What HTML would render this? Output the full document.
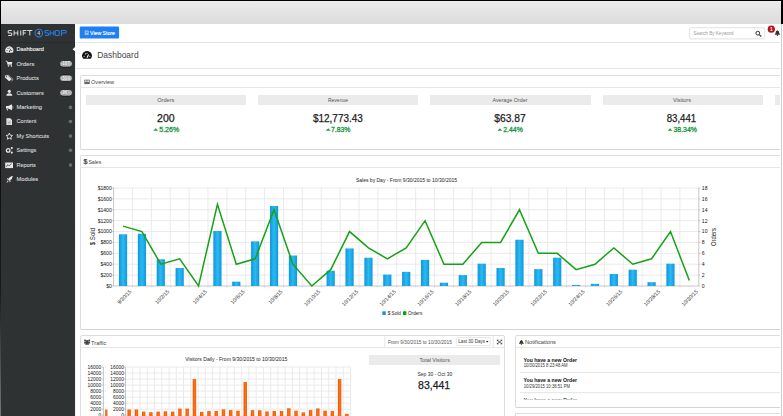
<!DOCTYPE html>
<html><head><meta charset="utf-8">
<style>
*{margin:0;padding:0;box-sizing:border-box}
html,body{width:783px;height:416px;overflow:hidden;background:#fff;font-family:"Liberation Sans", sans-serif;}
.a{position:absolute}
svg text{font-family:"Liberation Sans", sans-serif}
</style></head><body>
<div class="a" style="left:0;top:0;width:783px;height:416px;overflow:hidden;background:#fff">
<div class="a" style="left:1px;top:1px;width:780px;height:22.6px;background:linear-gradient(#ebebeb,#dcdcdc);border-top-right-radius:3px"></div>
<div class="a" style="left:0;top:0;width:783px;height:1px;background:#000"></div>
<div class="a" style="left:781px;top:0;width:2px;height:24px;background:#000"></div>
<div class="a" style="left:0;top:0;width:1px;height:416px;background:linear-gradient(#000 0%,#1a1a1a 70%,#777 100%)"></div>
<div class="a" style="left:1px;top:24px;width:74.2px;height:392px;background:#2e3233"></div>
<div class="a" style="left:1px;top:42px;width:74.2px;height:1px;background:#282b2c"></div>
<div class="a" style="left:75.2px;top:41.6px;width:706px;height:1px;background:#e6e6e6"></div>
<div class="a" style="left:75.2px;top:68px;width:706px;height:1px;background:#e6e6e6"></div>
<div class="a" style="left:75.2px;top:42px;width:1px;height:374px;background:#f1f1f1"></div>
<div class="a" style="left:781.2px;top:24px;width:1px;height:392px;background:#cdcdcd"></div>
<!-- panels -->
<div class="a" style="left:80px;top:75.3px;width:720px;height:74.6px;border:1px solid #dddddd;border-bottom:1.5px solid #d6d6d6;border-radius:2px"></div>
<div class="a" style="left:80px;top:86.6px;width:720px;height:1px;background:#e6e6e6"></div>
<div class="a" style="left:80px;top:155.3px;width:720px;height:174.6px;border:1px solid #dddddd;border-bottom:1.6px solid #d4d4d4;border-radius:2px"></div>
<div class="a" style="left:80px;top:166.6px;width:720px;height:1px;background:#e6e6e6"></div>
<div class="a" style="left:80px;top:335.3px;width:425px;height:100px;border:1px solid #dddddd;border-radius:2px"></div>
<div class="a" style="left:80px;top:347px;width:425px;height:1px;background:#e6e6e6"></div>
<div class="a" style="left:515px;top:335.3px;width:300px;height:73px;border:1px solid #dddddd;border-bottom:1.6px solid #d4d4d4;border-radius:2px"></div>
<div class="a" style="left:515px;top:347px;width:300px;height:1px;background:#e6e6e6"></div>
<div class="a" style="left:515px;top:413px;width:300px;height:20px;border:1px solid #dddddd"></div>
<!-- gray cells -->
<div class="a" style="left:85.6px;top:94.9px;width:160.4px;height:10.2px;background:#ebebeb"></div>
<div class="a" style="left:257.9px;top:94.9px;width:160.4px;height:10.2px;background:#ebebeb"></div>
<div class="a" style="left:430.2px;top:94.9px;width:160.4px;height:10.2px;background:#ebebeb"></div>
<div class="a" style="left:602.5px;top:94.9px;width:160.4px;height:10.2px;background:#ebebeb"></div>
<div class="a" style="left:774.8px;top:94.9px;width:60px;height:10.2px;background:#ebebeb"></div>
<div class="a" style="left:369.4px;top:354.8px;width:130.5px;height:10.6px;background:#ebebeb"></div>
<svg class="a" style="left:0;top:0" width="783" height="416" viewBox="0 0 783 416">
<path d="M11.8 30.4 H9.1 Q8.1 30.4 8.1 31.4 V31.950000000000003 Q8.1 32.95 9.1 32.95 H10.8 Q11.8 32.95 11.8 33.95 V34.5 Q11.8 35.5 10.8 35.5 H8.1" fill="none" stroke="#d8d8d8" stroke-width="1.05"/>
<path d="M14.1 30.4 V35.5 M17.8 30.4 V35.5 M14.1 32.95 H17.8" fill="none" stroke="#d8d8d8" stroke-width="1.05"/>
<path d="M20.75 30.4 V35.5" fill="none" stroke="#d8d8d8" stroke-width="1.05"/>
<path d="M26.4 30.4 H23.2 V35.5 M23.2 32.95 H25.799999999999997" fill="none" stroke="#d8d8d8" stroke-width="1.05"/>
<path d="M27.2 30.4 H32.4 M29.799999999999997 30.4 V35.5" fill="none" stroke="#d8d8d8" stroke-width="1.05"/>
<circle cx="38.8" cy="33.1" r="3.8" fill="none" stroke="#2a7de6" stroke-width="1.1"/>
<text x="38.60" y="35.30" font-size="5.2" font-weight="bold" text-anchor="middle" fill="#cfcfcf">4</text>
<path d="M48.6 30.4 H46.0 Q45.0 30.4 45.0 31.4 V31.950000000000003 Q45.0 32.95 46.0 32.95 H47.6 Q48.6 32.95 48.6 33.95 V34.5 Q48.6 35.5 47.6 35.5 H45.0" fill="none" stroke="#2a7de6" stroke-width="1.05"/>
<path d="M50.1 30.4 V35.5 M53.8 30.4 V35.5 M50.1 32.95 H53.8" fill="none" stroke="#2a7de6" stroke-width="1.05"/>
<path d="M56.2 30.4 H58.2 Q59.2 30.4 59.2 31.4 V34.5 Q59.2 35.5 58.2 35.5 H56.2 Q55.2 35.5 55.2 34.5 V31.4 Q55.2 30.4 56.2 30.4 Z" fill="none" stroke="#2a7de6" stroke-width="1.05"/>
<path d="M61.4 36.0 V30.4 H65.2 Q66.2 30.4 66.2 31.4 V31.950000000000003 Q66.2 32.95 65.2 32.95 H61.4" fill="none" stroke="#2a7de6" stroke-width="1.05"/>
<g transform="translate(5.3,46.50)"><path d="M0.8 6.3 A4 4 0 1 1 7.2 6.3 Z" fill="#e6e6e6"/><path d="M4 5.5 L5.3 2.6" stroke="#2e3233" stroke-width="0.9"/><circle cx="1.7" cy="4.1" r="0.5" fill="#2e3233"/><circle cx="2.7" cy="2.1" r="0.5" fill="#2e3233"/><circle cx="6.3" cy="4.1" r="0.5" fill="#2e3233"/><circle cx="4" cy="1.4" r="0.5" fill="#2e3233"/></g>
<text x="16.54" y="51.20" font-size="6.0" textLength="27.42" lengthAdjust="spacingAndGlyphs" fill="#f2f2f2" stroke="#f2f2f2" stroke-width="0.12">Dashboard</text>
<g transform="translate(5.8,60.80)"><path d="M0 0.4 H1.3 L2.2 4 H6.2" fill="none" stroke="#e6e6e6" stroke-width="0.9"/><path d="M1.6 1.2 H6.6 L6 3.3 H2.1 Z" fill="#e6e6e6"/><circle cx="2.6" cy="5.2" r="0.7" fill="#e6e6e6"/><circle cx="5.6" cy="5.2" r="0.7" fill="#e6e6e6"/></g>
<text x="16.54" y="65.50" font-size="6.0" textLength="17.92" lengthAdjust="spacingAndGlyphs" fill="#d6d6d6" stroke="#d6d6d6" stroke-width="0.12">Orders</text>
<rect x="59.6" y="60.50" width="12.9" height="6.6" rx="3.3" fill="#b9b9b9" stroke="#141616" stroke-width="0.8"/>
<text x="61.90" y="65.40" font-size="4.6" textLength="8.20" lengthAdjust="spacingAndGlyphs" font-weight="bold" fill="#fafafa" stroke="#5a5a5a" stroke-width="0.35" paint-order="stroke">187</text>
<g transform="translate(4.8,75.10)"><path d="M0 0.3 H3 L7 4.2 L4.3 6.2 L0.2 2.5 Z" fill="#e6e6e6"/><path d="M1.6 0.3 H4 L8.4 4.4 L6.6 6" fill="none" stroke="#e6e6e6" stroke-width="0.6"/><circle cx="1.5" cy="1.6" r="0.6" fill="#2e3233"/></g>
<text x="16.54" y="79.90" font-size="6.0" textLength="22.22" lengthAdjust="spacingAndGlyphs" fill="#d6d6d6" stroke="#d6d6d6" stroke-width="0.12">Products</text>
<rect x="59.6" y="74.90" width="12.9" height="6.6" rx="3.3" fill="#b9b9b9" stroke="#141616" stroke-width="0.8"/>
<text x="61.90" y="79.80" font-size="4.6" textLength="8.20" lengthAdjust="spacingAndGlyphs" font-weight="bold" fill="#fafafa" stroke="#5a5a5a" stroke-width="0.35" paint-order="stroke">309</text>
<g transform="translate(6.3,89.70)"><circle cx="3" cy="1.6" r="1.6" fill="#e6e6e6"/><path d="M0 6.1 Q0 3.5 3 3.5 Q6 3.5 6 6.1 Z" fill="#e6e6e6"/></g>
<text x="16.54" y="94.50" font-size="6.0" textLength="27.22" lengthAdjust="spacingAndGlyphs" fill="#d6d6d6" stroke="#d6d6d6" stroke-width="0.12">Customers</text>
<rect x="59.6" y="89.50" width="12.9" height="6.6" rx="3.3" fill="#b9b9b9" stroke="#141616" stroke-width="0.8"/>
<text x="61.90" y="94.40" font-size="4.6" textLength="8.20" lengthAdjust="spacingAndGlyphs" font-weight="bold" fill="#fafafa" stroke="#5a5a5a" stroke-width="0.35" paint-order="stroke">1K+</text>
<g transform="translate(5.8,104.30)"><path d="M0.2 1.8 H2.4 L6.2 0 V6 L2.4 4.3 H0.2 Z" fill="#e6e6e6"/><path d="M1.2 4.3 L1.9 6.2" stroke="#e6e6e6" stroke-width="1"/><path d="M7 1.8 V4.2" stroke="#e6e6e6" stroke-width="0.6"/></g>
<text x="16.54" y="109.20" font-size="6.0" textLength="25.52" lengthAdjust="spacingAndGlyphs" fill="#d6d6d6" stroke="#d6d6d6" stroke-width="0.12">Marketing</text>
<circle cx="70.5" cy="107.40" r="1.8" fill="#6a6e6f"/>
<g transform="translate(6,117.90)"><path d="M0.4 0.4 H4.3 L6 2.1 V7.2 H0.4 Z" fill="#e6e6e6"/><path d="M1.5 3.3 H4.8 M1.5 4.6 H4.8 M1.5 5.9 H4.8" stroke="#888" stroke-width="0.5"/></g>
<text x="16.54" y="123.30" font-size="6.0" textLength="19.82" lengthAdjust="spacingAndGlyphs" fill="#d6d6d6" stroke="#d6d6d6" stroke-width="0.12">Content</text>
<circle cx="70.5" cy="121.50" r="1.8" fill="#6a6e6f"/>
<g transform="translate(5.8,133.10)"><polygon points="3.50,0.00 4.44,2.11 6.73,2.35 5.02,3.89 5.50,6.15 3.50,5.00 1.50,6.15 1.98,3.89 0.27,2.35 2.56,2.11" fill="none" stroke="#e6e6e6" stroke-width="0.9"/></g>
<text x="16.54" y="137.90" font-size="6.0" textLength="32.62" lengthAdjust="spacingAndGlyphs" fill="#d6d6d6" stroke="#d6d6d6" stroke-width="0.12">My Shortcuts</text>
<circle cx="70.5" cy="136.10" r="1.8" fill="#6a6e6f"/>
<g transform="translate(5.8,146.80)"><circle cx="2.4" cy="3.6" r="1.8" fill="none" stroke="#e6e6e6" stroke-width="1.3"/><circle cx="6" cy="1.3" r="1.1" fill="#e6e6e6"/><circle cx="6" cy="5.8" r="1.1" fill="#e6e6e6"/></g>
<text x="16.54" y="152.10" font-size="6.0" textLength="19.82" lengthAdjust="spacingAndGlyphs" fill="#d6d6d6" stroke="#d6d6d6" stroke-width="0.12">Settings</text>
<circle cx="70.5" cy="150.30" r="1.8" fill="#6a6e6f"/>
<g transform="translate(4.8,162.10)"><rect x="0.4" y="0.4" width="7.8" height="5.6" fill="#e6e6e6"/><path d="M1.6 4.8 L3 2.5 L4.3 3.8 L6.8 1.5" fill="none" stroke="#2e3233" stroke-width="0.7"/></g>
<text x="16.54" y="166.90" font-size="6.0" textLength="19.32" lengthAdjust="spacingAndGlyphs" fill="#d6d6d6" stroke="#d6d6d6" stroke-width="0.12">Reports</text>
<circle cx="70.5" cy="165.10" r="1.8" fill="#6a6e6f"/>
<g transform="translate(6.3,176.00)"><path d="M6.6 0 Q3.2 0.4 1.7 3.6 L3 4.9 Q6.2 3.4 6.6 0 Z" fill="#e6e6e6"/><path d="M1.9 3.4 L0.2 3.2 L1.9 1.8 Z M3.2 4.7 L3.4 6.4 L4.7 4.7 Z M1.4 4.6 L0 7 L2.3 5.6 Z" fill="#e6e6e6"/></g>
<text x="16.54" y="181.40" font-size="6.0" textLength="21.72" lengthAdjust="spacingAndGlyphs" fill="#d6d6d6" stroke="#d6d6d6" stroke-width="0.12">Modules</text>
<path d="M76 46.3 L72.6 49.2 L76 52.1 Z" fill="#fff"/>
<rect x="79.7" y="26.4" width="39.4" height="12" rx="1" fill="#1f80f3"/>
<g transform="translate(84.6,30.7)"><path d="M0.6 0.3 H3.6 V2.6 H0.6 Z" fill="none" stroke="#fff" stroke-width="0.6"/><path d="M0 3.2 H4.2 V3.8 H0 Z" fill="#fff"/></g>
<text x="90.06" y="34.50" font-size="5.6" textLength="24.87" lengthAdjust="spacingAndGlyphs" fill="#fff" stroke="#fff" stroke-width="0.15">View Store</text>
<rect x="689.7" y="27.7" width="75" height="11.2" rx="1.5" fill="#fff" stroke="#d9d9d9" stroke-width="0.8"/>
<text x="693.41" y="35.20" font-size="4.9" textLength="40.19" lengthAdjust="spacingAndGlyphs" fill="#9a9a9a">Search By Keyword</text>
<g transform="translate(755.4,30.8)"><circle cx="2.4" cy="2.4" r="1.9" fill="none" stroke="#333" stroke-width="1"/><path d="M3.8 3.8 L5.9 5.7" stroke="#333" stroke-width="1.2"/></g>
<circle cx="771.3" cy="29.2" r="3.6" fill="#b8121b"/>
<text x="771.30" y="31.00" font-size="4.8" font-weight="bold" text-anchor="middle" fill="#fff">1</text>
<g transform="translate(774.6,30)"><path d="M2.8 0.3 Q4.7 0.8 4.7 3.2 L5.6 4.8 H0 L0.9 3.2 Q0.9 0.8 2.8 0.3 Z" fill="#333"/><circle cx="2.8" cy="5.3" r="0.7" fill="#333"/></g>
<g transform="translate(82.2,51.5) scale(0.96)"><path d="M1.0 7.6 A5 5 0 1 1 9.0 7.6 Z" fill="#151515"/><path d="M5 6.6 L6.6 3.2" stroke="#fff" stroke-width="1.1"/><circle cx="2.1" cy="4.9" r="0.6" fill="#fff"/><circle cx="3.3" cy="2.5" r="0.6" fill="#fff"/><circle cx="7.9" cy="4.9" r="0.6" fill="#fff"/><circle cx="5" cy="1.8" r="0.6" fill="#fff"/></g>
<text x="97.21" y="57.90" font-size="9.9" textLength="41.39" lengthAdjust="spacingAndGlyphs" fill="#444">Dashboard</text>
<g transform="translate(84,79.4)"><rect x="0.3" y="0.3" width="5.4" height="4.4" fill="#666" /><rect x="1.1" y="1.1" width="1.5" height="1.4" fill="#fff"/><rect x="3.3" y="1.1" width="1.6" height="1.4" fill="#fff"/></g>
<text x="91.09" y="83.80" font-size="5.2" textLength="23.02" lengthAdjust="spacingAndGlyphs" fill="#444">Overview</text>
<text x="157.16" y="102.10" font-size="5.6" textLength="17.17" lengthAdjust="spacingAndGlyphs" fill="#555">Orders</text>
<text x="327.96" y="102.10" font-size="5.6" textLength="20.07" lengthAdjust="spacingAndGlyphs" fill="#555">Revenue</text>
<text x="492.46" y="102.10" font-size="5.6" textLength="34.97" lengthAdjust="spacingAndGlyphs" fill="#555">Average Order</text>
<text x="672.96" y="102.10" font-size="5.6" textLength="17.97" lengthAdjust="spacingAndGlyphs" fill="#555">Visitors</text>
<text x="157.07" y="121.70" font-size="10.5" textLength="17.56" lengthAdjust="spacingAndGlyphs" fill="#1c1c1c" stroke="#1c1c1c" stroke-width="0.25">200</text>
<text x="312.97" y="121.70" font-size="10.5" textLength="49.86" lengthAdjust="spacingAndGlyphs" fill="#1c1c1c" stroke="#1c1c1c" stroke-width="0.25">$12,773.43</text>
<text x="494.27" y="121.70" font-size="10.5" textLength="31.36" lengthAdjust="spacingAndGlyphs" fill="#1c1c1c" stroke="#1c1c1c" stroke-width="0.25">$63.87</text>
<text x="666.67" y="121.70" font-size="10.5" textLength="29.56" lengthAdjust="spacingAndGlyphs" fill="#1c1c1c" stroke="#1c1c1c" stroke-width="0.25">83,441</text>
<path d="M153.30 130.8 L155.70 128.2 L158.10 130.8 Z" fill="#1e9c48"/>
<text x="159.28" y="131.70" font-size="7.0" textLength="19.84" lengthAdjust="spacingAndGlyphs" fill="#169844" stroke="#169844" stroke-width="0.3">5.26%</text>
<path d="M325.80 130.8 L328.20 128.2 L330.60 130.8 Z" fill="#1e9c48"/>
<text x="331.08" y="131.70" font-size="7.0" textLength="19.34" lengthAdjust="spacingAndGlyphs" fill="#169844" stroke="#169844" stroke-width="0.3">7.83%</text>
<path d="M497.50 130.8 L499.90 128.2 L502.30 130.8 Z" fill="#1e9c48"/>
<text x="503.18" y="131.70" font-size="7.0" textLength="19.64" lengthAdjust="spacingAndGlyphs" fill="#169844" stroke="#169844" stroke-width="0.3">2.44%</text>
<path d="M667.70 130.8 L670.10 128.2 L672.50 130.8 Z" fill="#1e9c48"/>
<text x="673.48" y="131.70" font-size="7.0" textLength="23.54" lengthAdjust="spacingAndGlyphs" fill="#169844" stroke="#169844" stroke-width="0.3">38.34%</text>
<text x="83.62" y="164.40" font-size="6.4" textLength="3.97" lengthAdjust="spacingAndGlyphs" fill="#333" stroke="#333" stroke-width="0.2">$</text>
<text x="88.39" y="164.00" font-size="5.2" textLength="12.92" lengthAdjust="spacingAndGlyphs" fill="#444">Sales</text>
<line x1="113.6" y1="188.00" x2="698.8" y2="188.00" stroke="#e8e8e8" stroke-width="0.9"/>
<line x1="113.6" y1="198.89" x2="698.8" y2="198.89" stroke="#e8e8e8" stroke-width="0.9"/>
<line x1="113.6" y1="209.78" x2="698.8" y2="209.78" stroke="#e8e8e8" stroke-width="0.9"/>
<line x1="113.6" y1="220.67" x2="698.8" y2="220.67" stroke="#e8e8e8" stroke-width="0.9"/>
<line x1="113.6" y1="231.56" x2="698.8" y2="231.56" stroke="#e8e8e8" stroke-width="0.9"/>
<line x1="113.6" y1="242.44" x2="698.8" y2="242.44" stroke="#e8e8e8" stroke-width="0.9"/>
<line x1="113.6" y1="253.33" x2="698.8" y2="253.33" stroke="#e8e8e8" stroke-width="0.9"/>
<line x1="113.6" y1="264.22" x2="698.8" y2="264.22" stroke="#e8e8e8" stroke-width="0.9"/>
<line x1="113.6" y1="275.11" x2="698.8" y2="275.11" stroke="#e8e8e8" stroke-width="0.9"/>
<line x1="132.48" y1="188.0" x2="132.48" y2="286.0" stroke="#e8e8e8" stroke-width="0.9"/>
<line x1="132.48" y1="286.0" x2="132.48" y2="287.5" stroke="#c8c8c8" stroke-width="0.7"/>
<line x1="151.35" y1="188.0" x2="151.35" y2="286.0" stroke="#e8e8e8" stroke-width="0.9"/>
<line x1="151.35" y1="286.0" x2="151.35" y2="287.5" stroke="#c8c8c8" stroke-width="0.7"/>
<line x1="170.23" y1="188.0" x2="170.23" y2="286.0" stroke="#e8e8e8" stroke-width="0.9"/>
<line x1="170.23" y1="286.0" x2="170.23" y2="287.5" stroke="#c8c8c8" stroke-width="0.7"/>
<line x1="189.11" y1="188.0" x2="189.11" y2="286.0" stroke="#e8e8e8" stroke-width="0.9"/>
<line x1="189.11" y1="286.0" x2="189.11" y2="287.5" stroke="#c8c8c8" stroke-width="0.7"/>
<line x1="207.99" y1="188.0" x2="207.99" y2="286.0" stroke="#e8e8e8" stroke-width="0.9"/>
<line x1="207.99" y1="286.0" x2="207.99" y2="287.5" stroke="#c8c8c8" stroke-width="0.7"/>
<line x1="226.86" y1="188.0" x2="226.86" y2="286.0" stroke="#e8e8e8" stroke-width="0.9"/>
<line x1="226.86" y1="286.0" x2="226.86" y2="287.5" stroke="#c8c8c8" stroke-width="0.7"/>
<line x1="245.74" y1="188.0" x2="245.74" y2="286.0" stroke="#e8e8e8" stroke-width="0.9"/>
<line x1="245.74" y1="286.0" x2="245.74" y2="287.5" stroke="#c8c8c8" stroke-width="0.7"/>
<line x1="264.62" y1="188.0" x2="264.62" y2="286.0" stroke="#e8e8e8" stroke-width="0.9"/>
<line x1="264.62" y1="286.0" x2="264.62" y2="287.5" stroke="#c8c8c8" stroke-width="0.7"/>
<line x1="283.50" y1="188.0" x2="283.50" y2="286.0" stroke="#e8e8e8" stroke-width="0.9"/>
<line x1="283.50" y1="286.0" x2="283.50" y2="287.5" stroke="#c8c8c8" stroke-width="0.7"/>
<line x1="302.37" y1="188.0" x2="302.37" y2="286.0" stroke="#e8e8e8" stroke-width="0.9"/>
<line x1="302.37" y1="286.0" x2="302.37" y2="287.5" stroke="#c8c8c8" stroke-width="0.7"/>
<line x1="321.25" y1="188.0" x2="321.25" y2="286.0" stroke="#e8e8e8" stroke-width="0.9"/>
<line x1="321.25" y1="286.0" x2="321.25" y2="287.5" stroke="#c8c8c8" stroke-width="0.7"/>
<line x1="340.13" y1="188.0" x2="340.13" y2="286.0" stroke="#e8e8e8" stroke-width="0.9"/>
<line x1="340.13" y1="286.0" x2="340.13" y2="287.5" stroke="#c8c8c8" stroke-width="0.7"/>
<line x1="359.01" y1="188.0" x2="359.01" y2="286.0" stroke="#e8e8e8" stroke-width="0.9"/>
<line x1="359.01" y1="286.0" x2="359.01" y2="287.5" stroke="#c8c8c8" stroke-width="0.7"/>
<line x1="377.88" y1="188.0" x2="377.88" y2="286.0" stroke="#e8e8e8" stroke-width="0.9"/>
<line x1="377.88" y1="286.0" x2="377.88" y2="287.5" stroke="#c8c8c8" stroke-width="0.7"/>
<line x1="396.76" y1="188.0" x2="396.76" y2="286.0" stroke="#e8e8e8" stroke-width="0.9"/>
<line x1="396.76" y1="286.0" x2="396.76" y2="287.5" stroke="#c8c8c8" stroke-width="0.7"/>
<line x1="415.64" y1="188.0" x2="415.64" y2="286.0" stroke="#e8e8e8" stroke-width="0.9"/>
<line x1="415.64" y1="286.0" x2="415.64" y2="287.5" stroke="#c8c8c8" stroke-width="0.7"/>
<line x1="434.52" y1="188.0" x2="434.52" y2="286.0" stroke="#e8e8e8" stroke-width="0.9"/>
<line x1="434.52" y1="286.0" x2="434.52" y2="287.5" stroke="#c8c8c8" stroke-width="0.7"/>
<line x1="453.39" y1="188.0" x2="453.39" y2="286.0" stroke="#e8e8e8" stroke-width="0.9"/>
<line x1="453.39" y1="286.0" x2="453.39" y2="287.5" stroke="#c8c8c8" stroke-width="0.7"/>
<line x1="472.27" y1="188.0" x2="472.27" y2="286.0" stroke="#e8e8e8" stroke-width="0.9"/>
<line x1="472.27" y1="286.0" x2="472.27" y2="287.5" stroke="#c8c8c8" stroke-width="0.7"/>
<line x1="491.15" y1="188.0" x2="491.15" y2="286.0" stroke="#e8e8e8" stroke-width="0.9"/>
<line x1="491.15" y1="286.0" x2="491.15" y2="287.5" stroke="#c8c8c8" stroke-width="0.7"/>
<line x1="510.03" y1="188.0" x2="510.03" y2="286.0" stroke="#e8e8e8" stroke-width="0.9"/>
<line x1="510.03" y1="286.0" x2="510.03" y2="287.5" stroke="#c8c8c8" stroke-width="0.7"/>
<line x1="528.90" y1="188.0" x2="528.90" y2="286.0" stroke="#e8e8e8" stroke-width="0.9"/>
<line x1="528.90" y1="286.0" x2="528.90" y2="287.5" stroke="#c8c8c8" stroke-width="0.7"/>
<line x1="547.78" y1="188.0" x2="547.78" y2="286.0" stroke="#e8e8e8" stroke-width="0.9"/>
<line x1="547.78" y1="286.0" x2="547.78" y2="287.5" stroke="#c8c8c8" stroke-width="0.7"/>
<line x1="566.66" y1="188.0" x2="566.66" y2="286.0" stroke="#e8e8e8" stroke-width="0.9"/>
<line x1="566.66" y1="286.0" x2="566.66" y2="287.5" stroke="#c8c8c8" stroke-width="0.7"/>
<line x1="585.54" y1="188.0" x2="585.54" y2="286.0" stroke="#e8e8e8" stroke-width="0.9"/>
<line x1="585.54" y1="286.0" x2="585.54" y2="287.5" stroke="#c8c8c8" stroke-width="0.7"/>
<line x1="604.41" y1="188.0" x2="604.41" y2="286.0" stroke="#e8e8e8" stroke-width="0.9"/>
<line x1="604.41" y1="286.0" x2="604.41" y2="287.5" stroke="#c8c8c8" stroke-width="0.7"/>
<line x1="623.29" y1="188.0" x2="623.29" y2="286.0" stroke="#e8e8e8" stroke-width="0.9"/>
<line x1="623.29" y1="286.0" x2="623.29" y2="287.5" stroke="#c8c8c8" stroke-width="0.7"/>
<line x1="642.17" y1="188.0" x2="642.17" y2="286.0" stroke="#e8e8e8" stroke-width="0.9"/>
<line x1="642.17" y1="286.0" x2="642.17" y2="287.5" stroke="#c8c8c8" stroke-width="0.7"/>
<line x1="661.05" y1="188.0" x2="661.05" y2="286.0" stroke="#e8e8e8" stroke-width="0.9"/>
<line x1="661.05" y1="286.0" x2="661.05" y2="287.5" stroke="#c8c8c8" stroke-width="0.7"/>
<line x1="679.92" y1="188.0" x2="679.92" y2="286.0" stroke="#e8e8e8" stroke-width="0.9"/>
<line x1="679.92" y1="286.0" x2="679.92" y2="287.5" stroke="#c8c8c8" stroke-width="0.7"/>
<line x1="113.6" y1="188.0" x2="113.6" y2="286.0" stroke="#c6c6c6" stroke-width="1"/>
<line x1="698.8" y1="188.0" x2="698.8" y2="286.0" stroke="#c6c6c6" stroke-width="1"/>
<line x1="113.6" y1="286.0" x2="698.8" y2="286.0" stroke="#c6c6c6" stroke-width="1"/>
<line x1="112.1" y1="188.00" x2="113.6" y2="188.00" stroke="#aaa" stroke-width="0.6"/>
<text x="111.80" y="189.85" font-size="5.1" text-anchor="end" fill="#151515">$1800</text>
<line x1="698.8" y1="188.00" x2="700.3" y2="188.00" stroke="#aaa" stroke-width="0.6"/>
<text x="701.80" y="189.85" font-size="5.1" fill="#151515">18</text>
<line x1="112.1" y1="198.89" x2="113.6" y2="198.89" stroke="#aaa" stroke-width="0.6"/>
<text x="111.80" y="200.74" font-size="5.1" text-anchor="end" fill="#151515">$1600</text>
<line x1="698.8" y1="198.89" x2="700.3" y2="198.89" stroke="#aaa" stroke-width="0.6"/>
<text x="701.80" y="200.74" font-size="5.1" fill="#151515">16</text>
<line x1="112.1" y1="209.78" x2="113.6" y2="209.78" stroke="#aaa" stroke-width="0.6"/>
<text x="111.80" y="211.63" font-size="5.1" text-anchor="end" fill="#151515">$1400</text>
<line x1="698.8" y1="209.78" x2="700.3" y2="209.78" stroke="#aaa" stroke-width="0.6"/>
<text x="701.80" y="211.63" font-size="5.1" fill="#151515">14</text>
<line x1="112.1" y1="220.67" x2="113.6" y2="220.67" stroke="#aaa" stroke-width="0.6"/>
<text x="111.80" y="222.52" font-size="5.1" text-anchor="end" fill="#151515">$1200</text>
<line x1="698.8" y1="220.67" x2="700.3" y2="220.67" stroke="#aaa" stroke-width="0.6"/>
<text x="701.80" y="222.52" font-size="5.1" fill="#151515">12</text>
<line x1="112.1" y1="231.56" x2="113.6" y2="231.56" stroke="#aaa" stroke-width="0.6"/>
<text x="111.80" y="233.41" font-size="5.1" text-anchor="end" fill="#151515">$1000</text>
<line x1="698.8" y1="231.56" x2="700.3" y2="231.56" stroke="#aaa" stroke-width="0.6"/>
<text x="701.80" y="233.41" font-size="5.1" fill="#151515">10</text>
<line x1="112.1" y1="242.44" x2="113.6" y2="242.44" stroke="#aaa" stroke-width="0.6"/>
<text x="111.80" y="244.29" font-size="5.1" text-anchor="end" fill="#151515">$800</text>
<line x1="698.8" y1="242.44" x2="700.3" y2="242.44" stroke="#aaa" stroke-width="0.6"/>
<text x="701.80" y="244.29" font-size="5.1" fill="#151515">8</text>
<line x1="112.1" y1="253.33" x2="113.6" y2="253.33" stroke="#aaa" stroke-width="0.6"/>
<text x="111.80" y="255.18" font-size="5.1" text-anchor="end" fill="#151515">$600</text>
<line x1="698.8" y1="253.33" x2="700.3" y2="253.33" stroke="#aaa" stroke-width="0.6"/>
<text x="701.80" y="255.18" font-size="5.1" fill="#151515">6</text>
<line x1="112.1" y1="264.22" x2="113.6" y2="264.22" stroke="#aaa" stroke-width="0.6"/>
<text x="111.80" y="266.07" font-size="5.1" text-anchor="end" fill="#151515">$400</text>
<line x1="698.8" y1="264.22" x2="700.3" y2="264.22" stroke="#aaa" stroke-width="0.6"/>
<text x="701.80" y="266.07" font-size="5.1" fill="#151515">4</text>
<line x1="112.1" y1="275.11" x2="113.6" y2="275.11" stroke="#aaa" stroke-width="0.6"/>
<text x="111.80" y="276.96" font-size="5.1" text-anchor="end" fill="#151515">$200</text>
<line x1="698.8" y1="275.11" x2="700.3" y2="275.11" stroke="#aaa" stroke-width="0.6"/>
<text x="701.80" y="276.96" font-size="5.1" fill="#151515">2</text>
<line x1="112.1" y1="286.00" x2="113.6" y2="286.00" stroke="#aaa" stroke-width="0.6"/>
<text x="111.80" y="287.85" font-size="5.1" text-anchor="end" fill="#151515">$0</text>
<line x1="698.8" y1="286.00" x2="700.3" y2="286.00" stroke="#aaa" stroke-width="0.6"/>
<text x="701.80" y="287.85" font-size="5.1" fill="#151515">0</text>
<defs><linearGradient id="bg" x1="0" x2="1" y1="0" y2="0"><stop offset="0" stop-color="#0e96dc"/><stop offset="0.5" stop-color="#2bbaf2"/><stop offset="1" stop-color="#0e98dd"/></linearGradient><linearGradient id="og" x1="0" x2="1" y1="0" y2="0"><stop offset="0" stop-color="#e85000"/><stop offset="0.5" stop-color="#ff7414"/><stop offset="1" stop-color="#f05800"/></linearGradient></defs>
<rect x="118.94" y="234.28" width="8.2" height="51.72" fill="url(#bg)"/>
<rect x="137.82" y="233.73" width="8.2" height="52.27" fill="url(#bg)"/>
<rect x="156.69" y="259.32" width="8.2" height="26.68" fill="url(#bg)"/>
<rect x="175.57" y="268.03" width="8.2" height="17.97" fill="url(#bg)"/>
<rect x="213.33" y="231.01" width="8.2" height="54.99" fill="url(#bg)"/>
<rect x="232.20" y="281.64" width="8.2" height="4.36" fill="url(#bg)"/>
<rect x="251.08" y="241.36" width="8.2" height="44.64" fill="url(#bg)"/>
<rect x="269.96" y="205.97" width="8.2" height="80.03" fill="url(#bg)"/>
<rect x="288.84" y="255.51" width="8.2" height="30.49" fill="url(#bg)"/>
<rect x="326.59" y="270.76" width="8.2" height="15.24" fill="url(#bg)"/>
<rect x="345.47" y="248.43" width="8.2" height="37.57" fill="url(#bg)"/>
<rect x="364.35" y="257.69" width="8.2" height="28.31" fill="url(#bg)"/>
<rect x="383.22" y="274.57" width="8.2" height="11.43" fill="url(#bg)"/>
<rect x="402.10" y="271.84" width="8.2" height="14.16" fill="url(#bg)"/>
<rect x="420.98" y="259.87" width="8.2" height="26.13" fill="url(#bg)"/>
<rect x="439.85" y="282.73" width="8.2" height="3.27" fill="url(#bg)"/>
<rect x="458.73" y="275.11" width="8.2" height="10.89" fill="url(#bg)"/>
<rect x="477.61" y="263.68" width="8.2" height="22.32" fill="url(#bg)"/>
<rect x="496.49" y="268.03" width="8.2" height="17.97" fill="url(#bg)"/>
<rect x="515.36" y="239.72" width="8.2" height="46.28" fill="url(#bg)"/>
<rect x="534.24" y="269.12" width="8.2" height="16.88" fill="url(#bg)"/>
<rect x="553.12" y="257.69" width="8.2" height="28.31" fill="url(#bg)"/>
<rect x="572.00" y="284.91" width="8.2" height="1.09" fill="url(#bg)"/>
<rect x="590.87" y="283.82" width="8.2" height="2.18" fill="url(#bg)"/>
<rect x="609.75" y="274.02" width="8.2" height="11.98" fill="url(#bg)"/>
<rect x="628.63" y="269.67" width="8.2" height="16.33" fill="url(#bg)"/>
<rect x="647.51" y="282.19" width="8.2" height="3.81" fill="url(#bg)"/>
<rect x="666.38" y="263.68" width="8.2" height="22.32" fill="url(#bg)"/>
<polyline points="123.04,226.11 141.92,231.56 160.79,264.22 179.67,258.78 198.55,286.00 217.43,204.33 236.30,264.22 255.18,258.78 274.06,209.78 292.94,264.22 311.81,286.00 330.69,269.67 349.57,231.56 368.45,247.89 387.32,258.78 406.20,247.89 425.08,220.67 443.95,264.22 462.83,264.22 481.71,242.44 500.59,242.44 519.46,209.78 538.34,253.33 557.22,253.33 576.10,269.67 594.97,264.22 613.85,247.89 632.73,264.22 651.61,258.78 670.48,231.56 689.36,280.56" fill="none" stroke="#16a116" stroke-width="1.5" stroke-linejoin="miter"/>
<text transform="translate(131.94,292.00) rotate(-45)" font-size="5.3" text-anchor="end" fill="#222">9/30/15</text>
<text transform="translate(169.69,292.00) rotate(-45)" font-size="5.3" text-anchor="end" fill="#222">10/2/15</text>
<text transform="translate(207.45,292.00) rotate(-45)" font-size="5.3" text-anchor="end" fill="#222">10/4/15</text>
<text transform="translate(245.20,292.00) rotate(-45)" font-size="5.3" text-anchor="end" fill="#222">10/6/15</text>
<text transform="translate(282.96,292.00) rotate(-45)" font-size="5.3" text-anchor="end" fill="#222">10/8/15</text>
<text transform="translate(320.71,292.00) rotate(-45)" font-size="5.3" text-anchor="end" fill="#222">10/10/15</text>
<text transform="translate(358.47,292.00) rotate(-45)" font-size="5.3" text-anchor="end" fill="#222">10/12/15</text>
<text transform="translate(396.22,292.00) rotate(-45)" font-size="5.3" text-anchor="end" fill="#222">10/14/15</text>
<text transform="translate(433.98,292.00) rotate(-45)" font-size="5.3" text-anchor="end" fill="#222">10/16/15</text>
<text transform="translate(471.73,292.00) rotate(-45)" font-size="5.3" text-anchor="end" fill="#222">10/18/15</text>
<text transform="translate(509.49,292.00) rotate(-45)" font-size="5.3" text-anchor="end" fill="#222">10/20/15</text>
<text transform="translate(547.24,292.00) rotate(-45)" font-size="5.3" text-anchor="end" fill="#222">10/22/15</text>
<text transform="translate(585.00,292.00) rotate(-45)" font-size="5.3" text-anchor="end" fill="#222">10/24/15</text>
<text transform="translate(622.75,292.00) rotate(-45)" font-size="5.3" text-anchor="end" fill="#222">10/26/15</text>
<text transform="translate(660.51,292.00) rotate(-45)" font-size="5.3" text-anchor="end" fill="#222">10/28/15</text>
<text transform="translate(698.26,292.00) rotate(-45)" font-size="5.3" text-anchor="end" fill="#222">10/30/15</text>
<text transform="translate(94.7,236.6) rotate(-90)" font-size="6.3" text-anchor="middle" fill="#1a1a1a" textLength="17.3" lengthAdjust="spacingAndGlyphs">$ Sold</text>
<text transform="translate(716.0,237.0) rotate(-90)" font-size="6.3" text-anchor="middle" fill="#1a1a1a" textLength="17.9" lengthAdjust="spacingAndGlyphs">Orders</text>
<text x="355.99" y="181.80" font-size="5.2" textLength="101.02" lengthAdjust="spacingAndGlyphs" fill="#1a1a1a">Sales by Day - From 9/30/2015 to 10/30/2015</text>
<rect x="382.3" y="311.3" width="3.5" height="3.6" rx="0.6" fill="#1b8fe6"/>
<text x="387.70" y="314.90" font-size="5.0" textLength="13.30" lengthAdjust="spacingAndGlyphs" fill="#222">$ Sold</text>
<rect x="403.0" y="311.3" width="3.4" height="3.6" rx="0.6" fill="#03a503"/>
<text x="408.00" y="314.90" font-size="5.0" textLength="14.20" lengthAdjust="spacingAndGlyphs" fill="#222">Orders</text>
<g transform="translate(83.9,339.4)" fill="#444"><circle cx="1.1" cy="1.1" r="1.0"/><circle cx="5.3" cy="1.1" r="1.0"/><circle cx="3.2" cy="1.9" r="1.3"/><path d="M0 4.2 Q0 2.2 1.4 2.2 L2 2.6 H4.4 L5 2.2 Q6.4 2.2 6.4 4.2 Z"/><path d="M1.2 5.4 Q1.2 3.3 3.2 3.3 Q5.2 3.3 5.2 5.4 Z"/></g>
<text x="91.08" y="344.50" font-size="5.4" textLength="15.35" lengthAdjust="spacingAndGlyphs" fill="#444">Traffic</text>
<line x1="384.8" y1="336.5" x2="384.8" y2="347" stroke="#e2e2e2" stroke-width="0.9"/>
<line x1="493.2" y1="336.5" x2="493.2" y2="347" stroke="#e2e2e2" stroke-width="0.9"/>
<text x="387.90" y="343.60" font-size="5.0" textLength="63.90" lengthAdjust="spacingAndGlyphs" fill="#555">From 9/30/2015 to 10/30/2015</text>
<rect x="456.3" y="337.6" width="34" height="7.9" rx="1" fill="#fff" stroke="#dcdcdc" stroke-width="0.7"/>
<text x="458.30" y="343.10" font-size="5.0" textLength="26.80" lengthAdjust="spacingAndGlyphs" fill="#333">Last 30 Days</text>
<path d="M485.9 340.9 H488.5 L487.2 342.4 Z" fill="#222"/>
<g transform="translate(496.9,339.7)" fill="#333"><path d="M0.8 0.8 L4.5 3.8 M4.5 0.8 L0.8 3.8" stroke="#333" stroke-width="0.75"/><path d="M0 0 H2 L0 1.8 Z M5.3 0 H3.3 L5.3 1.8 Z M0 4.6 H2 L0 2.8 Z M5.3 4.6 H3.3 L5.3 2.8 Z"/></g>
<line x1="125.5" y1="367.00" x2="350.5" y2="367.00" stroke="#e8e8e8" stroke-width="0.9"/>
<line x1="125.5" y1="373.02" x2="350.5" y2="373.02" stroke="#e8e8e8" stroke-width="0.9"/>
<line x1="125.5" y1="379.05" x2="350.5" y2="379.05" stroke="#e8e8e8" stroke-width="0.9"/>
<line x1="125.5" y1="385.07" x2="350.5" y2="385.07" stroke="#e8e8e8" stroke-width="0.9"/>
<line x1="125.5" y1="391.10" x2="350.5" y2="391.10" stroke="#e8e8e8" stroke-width="0.9"/>
<line x1="125.5" y1="397.12" x2="350.5" y2="397.12" stroke="#e8e8e8" stroke-width="0.9"/>
<line x1="125.5" y1="403.15" x2="350.5" y2="403.15" stroke="#e8e8e8" stroke-width="0.9"/>
<line x1="125.5" y1="409.18" x2="350.5" y2="409.18" stroke="#e8e8e8" stroke-width="0.9"/>
<line x1="125.5" y1="415.20" x2="350.5" y2="415.20" stroke="#e8e8e8" stroke-width="0.9"/>
<line x1="132.76" y1="367.0" x2="132.76" y2="415.2" stroke="#e8e8e8" stroke-width="0.9"/>
<line x1="140.02" y1="367.0" x2="140.02" y2="415.2" stroke="#e8e8e8" stroke-width="0.9"/>
<line x1="147.27" y1="367.0" x2="147.27" y2="415.2" stroke="#e8e8e8" stroke-width="0.9"/>
<line x1="154.53" y1="367.0" x2="154.53" y2="415.2" stroke="#e8e8e8" stroke-width="0.9"/>
<line x1="161.79" y1="367.0" x2="161.79" y2="415.2" stroke="#e8e8e8" stroke-width="0.9"/>
<line x1="169.05" y1="367.0" x2="169.05" y2="415.2" stroke="#e8e8e8" stroke-width="0.9"/>
<line x1="176.31" y1="367.0" x2="176.31" y2="415.2" stroke="#e8e8e8" stroke-width="0.9"/>
<line x1="183.56" y1="367.0" x2="183.56" y2="415.2" stroke="#e8e8e8" stroke-width="0.9"/>
<line x1="190.82" y1="367.0" x2="190.82" y2="415.2" stroke="#e8e8e8" stroke-width="0.9"/>
<line x1="198.08" y1="367.0" x2="198.08" y2="415.2" stroke="#e8e8e8" stroke-width="0.9"/>
<line x1="205.34" y1="367.0" x2="205.34" y2="415.2" stroke="#e8e8e8" stroke-width="0.9"/>
<line x1="212.60" y1="367.0" x2="212.60" y2="415.2" stroke="#e8e8e8" stroke-width="0.9"/>
<line x1="219.85" y1="367.0" x2="219.85" y2="415.2" stroke="#e8e8e8" stroke-width="0.9"/>
<line x1="227.11" y1="367.0" x2="227.11" y2="415.2" stroke="#e8e8e8" stroke-width="0.9"/>
<line x1="234.37" y1="367.0" x2="234.37" y2="415.2" stroke="#e8e8e8" stroke-width="0.9"/>
<line x1="241.63" y1="367.0" x2="241.63" y2="415.2" stroke="#e8e8e8" stroke-width="0.9"/>
<line x1="248.89" y1="367.0" x2="248.89" y2="415.2" stroke="#e8e8e8" stroke-width="0.9"/>
<line x1="256.15" y1="367.0" x2="256.15" y2="415.2" stroke="#e8e8e8" stroke-width="0.9"/>
<line x1="263.40" y1="367.0" x2="263.40" y2="415.2" stroke="#e8e8e8" stroke-width="0.9"/>
<line x1="270.66" y1="367.0" x2="270.66" y2="415.2" stroke="#e8e8e8" stroke-width="0.9"/>
<line x1="277.92" y1="367.0" x2="277.92" y2="415.2" stroke="#e8e8e8" stroke-width="0.9"/>
<line x1="285.18" y1="367.0" x2="285.18" y2="415.2" stroke="#e8e8e8" stroke-width="0.9"/>
<line x1="292.44" y1="367.0" x2="292.44" y2="415.2" stroke="#e8e8e8" stroke-width="0.9"/>
<line x1="299.69" y1="367.0" x2="299.69" y2="415.2" stroke="#e8e8e8" stroke-width="0.9"/>
<line x1="306.95" y1="367.0" x2="306.95" y2="415.2" stroke="#e8e8e8" stroke-width="0.9"/>
<line x1="314.21" y1="367.0" x2="314.21" y2="415.2" stroke="#e8e8e8" stroke-width="0.9"/>
<line x1="321.47" y1="367.0" x2="321.47" y2="415.2" stroke="#e8e8e8" stroke-width="0.9"/>
<line x1="328.73" y1="367.0" x2="328.73" y2="415.2" stroke="#e8e8e8" stroke-width="0.9"/>
<line x1="335.98" y1="367.0" x2="335.98" y2="415.2" stroke="#e8e8e8" stroke-width="0.9"/>
<line x1="343.24" y1="367.0" x2="343.24" y2="415.2" stroke="#e8e8e8" stroke-width="0.9"/>
<line x1="350.50" y1="367.0" x2="350.50" y2="415.2" stroke="#e8e8e8" stroke-width="0.9"/>
<line x1="103.4" y1="367.0" x2="103.4" y2="417.2" stroke="#c6c6c6" stroke-width="1"/>
<line x1="101.9" y1="367.00" x2="103.4" y2="367.00" stroke="#aaa" stroke-width="0.6"/>
<text x="101.20" y="368.80" font-size="4.9" text-anchor="end" fill="#151515">16000</text>
<line x1="101.9" y1="373.02" x2="103.4" y2="373.02" stroke="#aaa" stroke-width="0.6"/>
<text x="101.20" y="374.82" font-size="4.9" text-anchor="end" fill="#151515">14000</text>
<line x1="101.9" y1="379.05" x2="103.4" y2="379.05" stroke="#aaa" stroke-width="0.6"/>
<text x="101.20" y="380.85" font-size="4.9" text-anchor="end" fill="#151515">12000</text>
<line x1="101.9" y1="385.07" x2="103.4" y2="385.07" stroke="#aaa" stroke-width="0.6"/>
<text x="101.20" y="386.88" font-size="4.9" text-anchor="end" fill="#151515">10000</text>
<line x1="101.9" y1="391.10" x2="103.4" y2="391.10" stroke="#aaa" stroke-width="0.6"/>
<text x="101.20" y="392.90" font-size="4.9" text-anchor="end" fill="#151515">8000</text>
<line x1="101.9" y1="397.12" x2="103.4" y2="397.12" stroke="#aaa" stroke-width="0.6"/>
<text x="101.20" y="398.93" font-size="4.9" text-anchor="end" fill="#151515">6000</text>
<line x1="101.9" y1="403.15" x2="103.4" y2="403.15" stroke="#aaa" stroke-width="0.6"/>
<text x="101.20" y="404.95" font-size="4.9" text-anchor="end" fill="#151515">4000</text>
<line x1="101.9" y1="409.18" x2="103.4" y2="409.18" stroke="#aaa" stroke-width="0.6"/>
<text x="101.20" y="410.98" font-size="4.9" text-anchor="end" fill="#151515">2000</text>
<line x1="101.9" y1="415.20" x2="103.4" y2="415.20" stroke="#aaa" stroke-width="0.6"/>
<text x="101.20" y="417.00" font-size="4.9" text-anchor="end" fill="#151515">0</text>
<line x1="125.5" y1="367.0" x2="125.5" y2="417.2" stroke="#c6c6c6" stroke-width="1"/>
<line x1="124.0" y1="367.00" x2="125.5" y2="367.00" stroke="#aaa" stroke-width="0.6"/>
<text x="123.90" y="368.80" font-size="4.9" text-anchor="end" fill="#151515">16000</text>
<line x1="124.0" y1="373.02" x2="125.5" y2="373.02" stroke="#aaa" stroke-width="0.6"/>
<text x="123.90" y="374.82" font-size="4.9" text-anchor="end" fill="#151515">14000</text>
<line x1="124.0" y1="379.05" x2="125.5" y2="379.05" stroke="#aaa" stroke-width="0.6"/>
<text x="123.90" y="380.85" font-size="4.9" text-anchor="end" fill="#151515">12000</text>
<line x1="124.0" y1="385.07" x2="125.5" y2="385.07" stroke="#aaa" stroke-width="0.6"/>
<text x="123.90" y="386.88" font-size="4.9" text-anchor="end" fill="#151515">10000</text>
<line x1="124.0" y1="391.10" x2="125.5" y2="391.10" stroke="#aaa" stroke-width="0.6"/>
<text x="123.90" y="392.90" font-size="4.9" text-anchor="end" fill="#151515">8000</text>
<line x1="124.0" y1="397.12" x2="125.5" y2="397.12" stroke="#aaa" stroke-width="0.6"/>
<text x="123.90" y="398.93" font-size="4.9" text-anchor="end" fill="#151515">6000</text>
<line x1="124.0" y1="403.15" x2="125.5" y2="403.15" stroke="#aaa" stroke-width="0.6"/>
<text x="123.90" y="404.95" font-size="4.9" text-anchor="end" fill="#151515">4000</text>
<line x1="124.0" y1="409.18" x2="125.5" y2="409.18" stroke="#aaa" stroke-width="0.6"/>
<text x="123.90" y="410.98" font-size="4.9" text-anchor="end" fill="#151515">2000</text>
<line x1="124.0" y1="415.20" x2="125.5" y2="415.20" stroke="#aaa" stroke-width="0.6"/>
<text x="123.90" y="417.00" font-size="4.9" text-anchor="end" fill="#151515">0</text>
<line x1="105" y1="367.00" x2="106" y2="367.00" stroke="#ccc" stroke-width="0.6"/>
<line x1="105" y1="373.02" x2="106" y2="373.02" stroke="#ccc" stroke-width="0.6"/>
<line x1="105" y1="379.05" x2="106" y2="379.05" stroke="#ccc" stroke-width="0.6"/>
<line x1="105" y1="385.07" x2="106" y2="385.07" stroke="#ccc" stroke-width="0.6"/>
<line x1="105" y1="391.10" x2="106" y2="391.10" stroke="#ccc" stroke-width="0.6"/>
<line x1="105" y1="397.12" x2="106" y2="397.12" stroke="#ccc" stroke-width="0.6"/>
<line x1="105" y1="403.15" x2="106" y2="403.15" stroke="#ccc" stroke-width="0.6"/>
<line x1="105" y1="409.18" x2="106" y2="409.18" stroke="#ccc" stroke-width="0.6"/>
<line x1="105" y1="415.20" x2="106" y2="415.20" stroke="#ccc" stroke-width="0.6"/>
<rect x="105.2" y="409.48" width="2.2" height="7.72" fill="url(#og)"/>
<rect x="127.43" y="409.48" width="3.4" height="7.72" fill="url(#og)"/>
<rect x="134.69" y="409.48" width="3.4" height="7.72" fill="url(#og)"/>
<rect x="141.95" y="411.58" width="3.4" height="5.61" fill="url(#og)"/>
<rect x="149.20" y="412.19" width="3.4" height="5.01" fill="url(#og)"/>
<rect x="156.46" y="411.58" width="3.4" height="5.61" fill="url(#og)"/>
<rect x="163.72" y="411.28" width="3.4" height="5.92" fill="url(#og)"/>
<rect x="170.98" y="411.58" width="3.4" height="5.61" fill="url(#og)"/>
<rect x="178.24" y="408.57" width="3.4" height="8.63" fill="url(#og)"/>
<rect x="185.49" y="408.57" width="3.4" height="8.63" fill="url(#og)"/>
<rect x="192.75" y="379.05" width="3.4" height="38.15" fill="url(#og)"/>
<rect x="200.01" y="411.89" width="3.4" height="5.31" fill="url(#og)"/>
<rect x="207.27" y="410.98" width="3.4" height="6.22" fill="url(#og)"/>
<rect x="214.53" y="410.98" width="3.4" height="6.22" fill="url(#og)"/>
<rect x="221.78" y="409.33" width="3.4" height="7.87" fill="url(#og)"/>
<rect x="229.04" y="410.08" width="3.4" height="7.12" fill="url(#og)"/>
<rect x="236.30" y="410.68" width="3.4" height="6.52" fill="url(#og)"/>
<rect x="243.56" y="382.06" width="3.4" height="35.14" fill="url(#og)"/>
<rect x="250.82" y="410.08" width="3.4" height="7.12" fill="url(#og)"/>
<rect x="258.07" y="410.23" width="3.4" height="6.97" fill="url(#og)"/>
<rect x="265.33" y="411.43" width="3.4" height="5.77" fill="url(#og)"/>
<rect x="272.59" y="410.98" width="3.4" height="6.22" fill="url(#og)"/>
<rect x="279.85" y="410.98" width="3.4" height="6.22" fill="url(#og)"/>
<rect x="287.11" y="408.27" width="3.4" height="8.93" fill="url(#og)"/>
<rect x="294.36" y="410.68" width="3.4" height="6.52" fill="url(#og)"/>
<rect x="301.62" y="412.34" width="3.4" height="4.86" fill="url(#og)"/>
<rect x="308.88" y="410.08" width="3.4" height="7.12" fill="url(#og)"/>
<rect x="316.14" y="408.42" width="3.4" height="8.78" fill="url(#og)"/>
<rect x="323.40" y="410.68" width="3.4" height="6.52" fill="url(#og)"/>
<rect x="330.65" y="410.98" width="3.4" height="6.22" fill="url(#og)"/>
<rect x="337.91" y="379.05" width="3.4" height="38.15" fill="url(#og)"/>
<rect x="345.17" y="413.84" width="3.4" height="3.36" fill="url(#og)"/>
<text x="185.29" y="361.20" font-size="5.2" textLength="102.02" lengthAdjust="spacingAndGlyphs" fill="#1a1a1a">Visitors Daily - From 9/30/2015 to 10/30/2015</text>
<text x="419.56" y="362.40" font-size="5.6" textLength="30.27" lengthAdjust="spacingAndGlyphs" fill="#555">Total Visitors</text>
<text x="417.46" y="376.40" font-size="5.6" textLength="34.77" lengthAdjust="spacingAndGlyphs" fill="#2a2a2a">Sep 30 - Oct 30</text>
<text x="418.08" y="388.70" font-size="10.4" textLength="32.05" lengthAdjust="spacingAndGlyphs" fill="#1c1c1c" stroke="#1c1c1c" stroke-width="0.25">83,441</text>
<g transform="translate(518.8,339.7)"><path d="M2.6 0.2 Q4.3 0.7 4.3 2.9 L5.2 4.1 H0 L0.9 2.9 Q0.9 0.7 2.6 0.2 Z" fill="#333"/><circle cx="2.6" cy="4.5" r="0.6" fill="#333"/></g>
<text x="524.98" y="343.90" font-size="5.3" textLength="30.94" lengthAdjust="spacingAndGlyphs" fill="#444">Notifications</text>
<text x="523.52" y="361.80" font-size="4.7" textLength="53.46" lengthAdjust="spacingAndGlyphs" font-weight="bold" fill="#111">You have a new Order</text>
<text x="523.72" y="367.40" font-size="4.6" textLength="43.85" lengthAdjust="spacingAndGlyphs" fill="#333">10/30/2015 8:23:48 AM</text>
<text x="523.52" y="381.80" font-size="4.7" textLength="53.46" lengthAdjust="spacingAndGlyphs" font-weight="bold" fill="#111">You have a new Order</text>
<text x="523.72" y="387.50" font-size="4.6" textLength="46.25" lengthAdjust="spacingAndGlyphs" fill="#333">10/29/2015 10:36:51 PM</text>
<line x1="520.2" y1="372.4" x2="790" y2="372.4" stroke="#e2e2e2" stroke-width="0.9"/>
<line x1="520.2" y1="392.7" x2="790" y2="392.7" stroke="#e2e2e2" stroke-width="0.9"/>
<clipPath id="nclip"><rect x="515" y="348" width="270" height="51.6"/></clipPath>
<g clip-path="url(#nclip)"><text x="523.52" y="402.40" font-size="4.7" textLength="53.46" lengthAdjust="spacingAndGlyphs" font-weight="bold" fill="#333">You have a new Order</text></g>
</svg>
<div class="a" style="left:779.8px;top:40px;width:3.2px;height:376px;background:#fff"></div>
<div class="a" style="left:781.2px;top:24px;width:1px;height:392px;background:#cdcdcd"></div>
</div>
</body></html>
